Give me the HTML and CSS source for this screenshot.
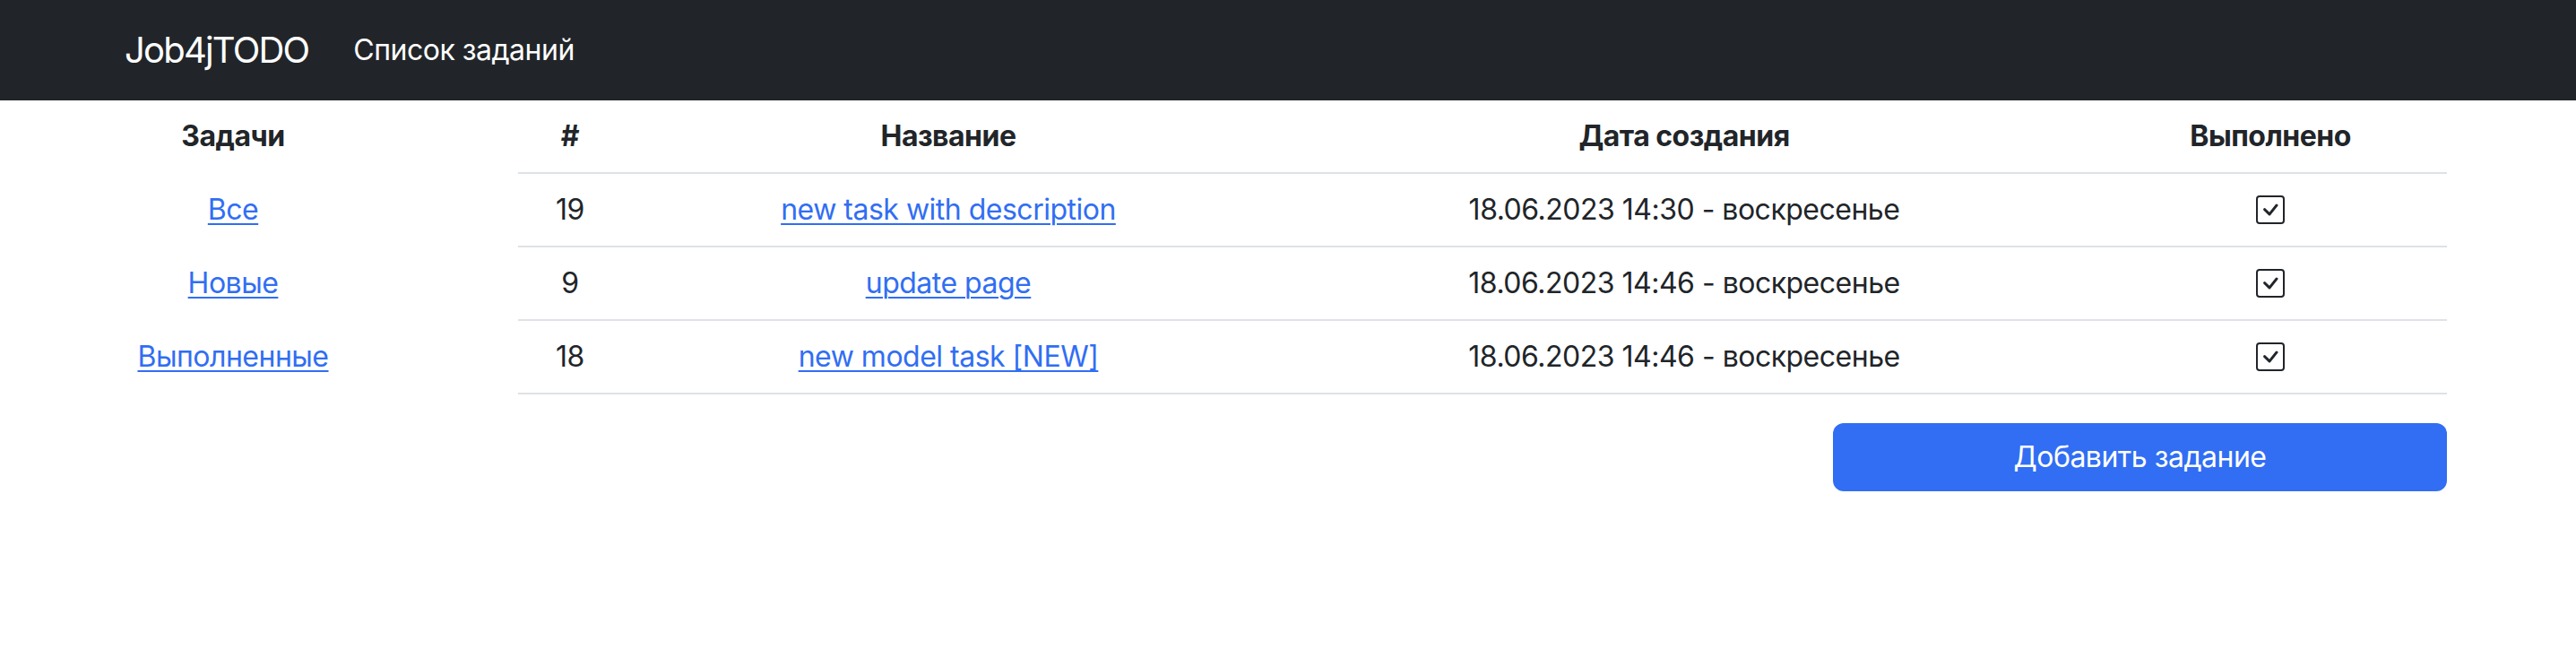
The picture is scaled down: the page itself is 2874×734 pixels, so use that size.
FILE: index.html
```html
<!DOCTYPE html>
<html lang="ru">
<head>
<meta charset="utf-8">
<title>Job4jTODO</title>
<link rel="stylesheet" href="styles.css">
</head>
<body>
<nav class="navbar">
  <a class="brand" href="#">Job4jTODO</a>
  <a class="nav-link" href="#">Список заданий</a>
</nav>
<main class="page">
  <aside class="sidebar">
    <table class="side-table">
      <thead><tr><th>Задачи</th></tr></thead>
      <tbody>
        <tr><td><a href="#">Все</a></td></tr>
        <tr><td><a href="#">Новые</a></td></tr>
        <tr><td><a href="#">Выполненные</a></td></tr>
      </tbody>
    </table>
  </aside>
  <section class="content">
    <table class="tasks">
      <colgroup>
        <col class="c-id"><col class="c-name"><col class="c-date"><col class="c-done">
      </colgroup>
      <thead>
        <tr><th>#</th><th>Название</th><th>Дата создания</th><th>Выполнено</th></tr>
      </thead>
      <tbody>
        <tr>
          <td>19</td>
          <td><a href="#">new task with description</a></td>
          <td>18.06.2023 14:30 - воскресенье</td>
          <td><svg class="check" viewBox="0 0 16 16"><path d="M14 1a1 1 0 0 1 1 1v12a1 1 0 0 1-1 1H2a1 1 0 0 1-1-1V2a1 1 0 0 1 1-1zM2 0a2 2 0 0 0-2 2v12a2 2 0 0 0 2 2h12a2 2 0 0 0 2-2V2a2 2 0 0 0-2-2z"/><path d="M10.97 4.97a.75.75 0 0 1 1.071 1.05l-3.992 4.99a.75.75 0 0 1-1.08.02L4.324 8.384a.75.75 0 1 1 1.06-1.06l2.094 2.093 3.473-4.425z"/></svg></td>
        </tr>
        <tr>
          <td>9</td>
          <td><a href="#">update page</a></td>
          <td>18.06.2023 14:46 - воскресенье</td>
          <td><svg class="check" viewBox="0 0 16 16"><path d="M14 1a1 1 0 0 1 1 1v12a1 1 0 0 1-1 1H2a1 1 0 0 1-1-1V2a1 1 0 0 1 1-1zM2 0a2 2 0 0 0-2 2v12a2 2 0 0 0 2 2h12a2 2 0 0 0 2-2V2a2 2 0 0 0-2-2z"/><path d="M10.97 4.97a.75.75 0 0 1 1.071 1.05l-3.992 4.99a.75.75 0 0 1-1.08.02L4.324 8.384a.75.75 0 1 1 1.06-1.06l2.094 2.093 3.473-4.425z"/></svg></td>
        </tr>
        <tr>
          <td>18</td>
          <td><a href="#">new model task [NEW]</a></td>
          <td>18.06.2023 14:46 - воскресенье</td>
          <td><svg class="check" viewBox="0 0 16 16"><path d="M14 1a1 1 0 0 1 1 1v12a1 1 0 0 1-1 1H2a1 1 0 0 1-1-1V2a1 1 0 0 1 1-1zM2 0a2 2 0 0 0-2 2v12a2 2 0 0 0 2 2h12a2 2 0 0 0 2-2V2a2 2 0 0 0-2-2z"/><path d="M10.97 4.97a.75.75 0 0 1 1.071 1.05l-3.992 4.99a.75.75 0 0 1-1.08.02L4.324 8.384a.75.75 0 1 1 1.06-1.06l2.094 2.093 3.473-4.425z"/></svg></td>
        </tr>
      </tbody>
    </table>
    <div class="actions">
      <a class="btn-primary" href="#">Добавить задание</a>
    </div>
  </section>
</main>
</body>
</html>
```
FILE: styles.css
```css
* { box-sizing: border-box; }
html, body { margin: 0; padding: 0; }
body {
  font-family: Inter, "Noto Sans", "Liberation Sans", sans-serif;
  font-size: 32px;
  line-height: 48px;
  letter-spacing: -0.5px;
  color: #212529;
  background: #fff;
}
a { color: #316ef3; text-decoration: underline; text-underline-offset: 4px; text-decoration-thickness: 2px; }

.navbar {
  height: 112px;
  background: #212529;
  display: flex;
  align-items: center;
  padding-left: 139px;
}
.brand {
  color: #fff;
  font-size: 40px;
  line-height: 60px;
  letter-spacing: -1.8px;
  text-decoration: none;
  margin-right: 34px;
}
.nav-link {
  color: #fff;
  text-decoration: none;
  padding: 0 16px;
  font-size: 32px;
}

.page {
  display: flex;
  padding-left: 141px;
}
.sidebar { width: 238px; flex: none; }
.side-table, .tasks { border-collapse: collapse; }
.side-table { width: 100%; }
.side-table th, .side-table td {
  padding: 16px 0;
  text-align: center;
  border-bottom: 2px solid transparent;
}
th { font-weight: 700; }

.content {
  margin-left: 199px;
  width: 2152px;
  flex: none;
}
.tasks { width: 100%; table-layout: fixed; margin-bottom: 32px; }
.c-id { width: 116px; }
.c-name { width: 728px; }
.c-date { width: 914px; }
.c-done { width: 394px; }
.tasks th, .tasks td {
  padding: 16px;
  text-align: center;
  border-bottom: 2px solid #dee2e6;
  vertical-align: middle;
}
.check {
  width: 32px;
  height: 32px;
  fill: #212529;
  display: block;
  margin: 8px auto;
}
.actions { display: flex; justify-content: flex-end; }
.btn-primary {
  width: 685px;
  height: 76px;
  background: #316ef3;
  color: #fff;
  text-decoration: none;
  border-radius: 12px;
  display: flex;
  align-items: center;
  justify-content: center;
}
```
